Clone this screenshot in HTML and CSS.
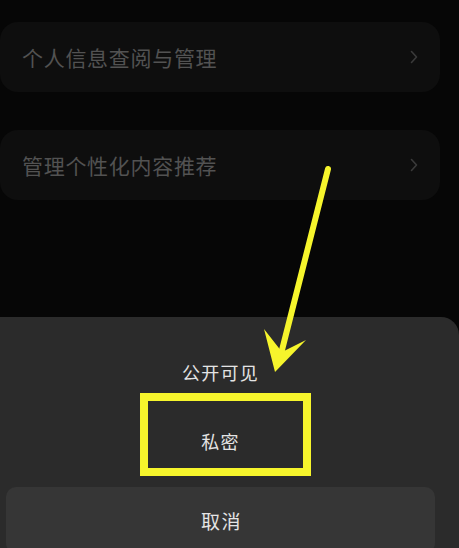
FILE: index.html
```html
<!DOCTYPE html>
<html lang="zh-CN">
<head>
<meta charset="utf-8">
<title>隐私设置</title>
<link rel="stylesheet" href="styles.css">
</head>
<body>
<div class="page">
  <div class="list">
    <div class="card">
      <span class="card-label">个人信息查阅与管理</span>
      <svg class="chev" width="8" height="14" viewBox="0 0 8 14"><path d="M1.5 1.5 L6.5 7 L1.5 12.5" fill="none" stroke="#3a3a3a" stroke-width="1.6" stroke-linecap="round" stroke-linejoin="round"/></svg>
    </div>
    <div class="card">
      <span class="card-label">管理个性化内容推荐</span>
      <svg class="chev" width="8" height="14" viewBox="0 0 8 14"><path d="M1.5 1.5 L6.5 7 L1.5 12.5" fill="none" stroke="#3a3a3a" stroke-width="1.6" stroke-linecap="round" stroke-linejoin="round"/></svg>
    </div>
  </div>
  <div class="sheet">
    <div class="option">公开可见</div>
    <div class="option">私密</div>
    <div class="cancel">取消</div>
  </div>
  <div class="highlight"></div>
  <svg class="arrow" width="459" height="548" viewBox="0 0 459 548">
    <line x1="328" y1="169" x2="281" y2="354" stroke="#f6f52c" stroke-width="6" stroke-linecap="round"/>
    <polygon points="264,329 282,352 306,340 275,372" fill="#f6f52c"/>
  </svg>
</div>
</body>
</html>
```
FILE: styles.css
```css
* { box-sizing: border-box; }
html, body {
  margin: 0;
  padding: 0;
  background: #060606;
}
body {
  font-family: "Noto Sans CJK SC", "Noto Sans", sans-serif;
}
.page {
  position: relative;
  width: 459px;
  height: 548px;
  overflow: hidden;
  display: flex;
  flex-direction: column;
}
.list {
  display: flex;
  flex-direction: column;
  gap: 38px;
  padding-top: 22px;
  width: 440px;
}
.card {
  height: 70px;
  background: #0e0e0e;
  border-radius: 18px;
  display: flex;
  align-items: center;
  justify-content: space-between;
  padding: 0 22px 0 22px;
}
.card-label {
  font-size: 21px;
  letter-spacing: 0.7px;
  color: #525252;
  line-height: 1;
}
.chev { display: block; }
.sheet {
  margin-top: auto;
  height: 231px;
  background: #2b2b2b;
  border-radius: 0 18px 0 0;
  display: flex;
  flex-direction: column;
  padding-top: 20px;
  flex-shrink: 0;
  overflow: hidden;
}
.option {
  height: 69px;
  flex-shrink: 0;
  display: flex;
  align-items: center;
  justify-content: center;
  font-size: 18px;
  letter-spacing: 1.3px;
  color: #e4e4e4;
  padding-right: 18px;
}
.cancel {
  margin: 12px 24px 0 6px;
  height: 66px;
  flex-shrink: 0;
  background: #363636;
  border-radius: 10px;
  display: flex;
  align-items: center;
  justify-content: center;
  font-size: 19px;
  letter-spacing: 1.5px;
  color: #e4e4e4;
  padding-left: 2px;
}
.highlight {
  position: absolute;
  left: 140px;
  top: 393px;
  width: 171px;
  height: 83px;
  border: 8px solid #f6f52c;
}
.arrow {
  position: absolute;
  left: 0;
  top: 0;
  pointer-events: none;
}
```
